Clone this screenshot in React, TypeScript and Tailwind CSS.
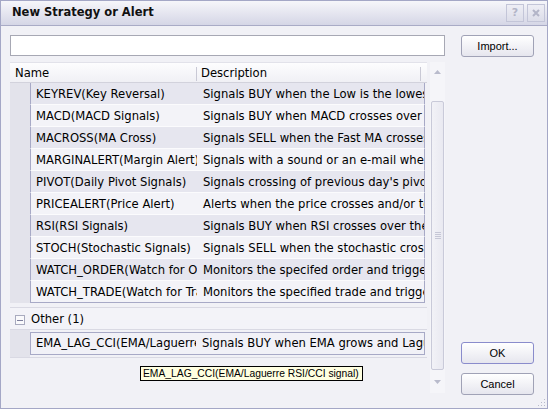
import React from 'react';

const rows: [string, string][] = [
  ['KEYREV(Key Reversal)', 'Signals BUY when the Low is the lowest Low for the period'],
  ['MACD(MACD Signals)', 'Signals BUY when MACD crosses over the signal line'],
  ['MACROSS(MA Cross)', 'Signals SELL when the Fast MA crosses under the Slow MA'],
  ['MARGINALERT(Margin Alert)', 'Signals with a sound or an e-mail when the margin level drops'],
  ['PIVOT(Daily Pivot Signals)', "Signals crossing of previous day's pivot levels"],
  ['PRICEALERT(Price Alert)', 'Alerts when the price crosses and/or touches the level'],
  ['RSI(RSI Signals)', 'Signals BUY when RSI crosses over the oversold level'],
  ['STOCH(Stochastic Signals)', 'Signals SELL when the stochastic crosses the overbought level'],
  ['WATCH_ORDER(Watch for Order)', 'Monitors the specifed order and triggers the alert'],
  ['WATCH_TRADE(Watch for Trade)', 'Monitors the specified trade and triggers the alert'],
];

const font = "font-['DejaVu_Sans',Verdana,sans-serif] text-[11.6px]";
const btnFont = "font-['Liberation_Sans',Arial,sans-serif] text-[11px]";

function Row({ name, desc, dark, last }: { name: string; desc: string; dark: boolean; last: boolean }) {
  return (
    <div className="flex h-[22px]">
      <div className="w-[20px] shrink-0 bg-[#e3e3eb]" />
      <div
        className={`flex w-[395px] shrink-0 items-center border-x border-[#a7a9c6] pt-[2px] ${
          last ? 'border-b border-b-[#a7a9c6]' : 'border-b border-b-[#fbfbfd]'
        } ${dark ? 'bg-[#e6e6ef]' : 'bg-[#f3f3f8]'}`}
      >
        <div className="w-[166px] shrink-0 overflow-hidden whitespace-nowrap pl-[5px] text-black">{name}</div>
        <div className="flex-1 overflow-hidden whitespace-nowrap pl-[6px] text-black">{desc}</div>
      </div>
    </div>
  );
}

function Button({ label, primary, className = '' }: { label: string; primary?: boolean; className?: string }) {
  return (
    <div
      className={`flex h-[22px] w-[73px] items-center justify-center rounded-[3px] border bg-gradient-to-b from-[#ffffff] to-[#e6e6ee] text-black ${btnFont} ${
        primary ? 'border-[#8a8ccc]' : 'border-[#a0a2b6]'
      } ${className}`}
    >
      {label}
    </div>
  );
}

export default function App() {
  return (
    <div className={`relative flex h-[409px] w-[548px] flex-col border border-[#a4a7c6] bg-[#f1f1f6] ${font}`}>
      {/* title bar */}
      <div className="flex h-[25px] shrink-0 items-center border-b border-[#a9abc6] bg-gradient-to-b from-[#f6f6fa] to-[#d5d6e6] pl-[11px] pr-[2px]">
        <span className="text-[11.5px] font-bold text-[#111]">New Strategy or Alert</span>
        <div className="ml-auto flex gap-[3px]">
          <div className="flex h-[18px] w-[18px] items-center justify-center border border-[#c3c5d8] bg-gradient-to-b from-[#eeeef5] to-[#dcdde9] text-[11px] font-bold text-[#b3b5c8]">
            ?
          </div>
          <div className="flex h-[18px] w-[18px] items-center justify-center border border-[#c3c5d8] bg-gradient-to-b from-[#eeeef5] to-[#dcdde9]">
            <svg width="8" height="8" viewBox="0 0 8 8">
              <path d="M1 1L7 7M7 1L1 7" stroke="#b3b5c8" strokeWidth="2" />
            </svg>
          </div>
        </div>
      </div>

      {/* body */}
      <div className="flex flex-1 pb-[13px] pl-[9px] pt-[9px]">
        <div className="flex w-[435px] flex-col">
          <div className="h-[21px] border border-[#a7a8b4] bg-white" />
          <div className="mt-[6px] flex h-[331px]">
            <div className="w-[417px] overflow-hidden">
              {/* header */}
              <div className="flex h-[21px] items-center border-y border-t-[#e2e2ea] border-b-[#d2d2dc] bg-gradient-to-b from-[#fdfdfe] to-[#f0f0f5] pt-[2px]">
                <div className="w-[186px] pl-[5px] text-black">Name</div>
                <div className="h-[14px] w-px bg-[#c9c9d5]" />
                <div className="w-[223px] pl-[4px] text-black">Description</div>
                <div className="h-[14px] w-px bg-[#c9c9d5]" />
              </div>
              {rows.map(([n, d], i) => (
                <Row key={n} name={n} desc={d} dark={i % 2 === 0} last={i === rows.length - 1} />
              ))}
              <div className="h-[5px] border-b border-[#d9d9e3]" />
              {/* group */}
              <div className="flex h-[22px] items-center border-b border-[#d9d9e3] bg-[#f3f3f8] pt-[3px]">
                <div className="ml-[5px] flex h-[10px] w-[10px] items-center justify-center border border-[#a9abbf] bg-[#fafafc]">
                  <div className="h-px w-[6px] bg-[#7d7f9c]" />
                </div>
                <span className="ml-[6px] text-black">Other (1)</span>
              </div>
              <div className="flex h-[28px] border-b border-[#d9d9e3]">
                <div className="w-[20px] shrink-0 bg-[#e3e3eb]" />
                <div className="my-[2px] flex h-[23px] w-[395px] shrink-0 items-center border border-[#a7a9c6] bg-[#f1f1f7] pt-[1px]">
                  <div className="w-[165px] shrink-0 overflow-hidden whitespace-nowrap pl-[5px] text-black">
                    EMA_LAG_CCI(EMA/Laguerre RSI/CCI signal)
                  </div>
                  <div className="flex-1 overflow-hidden whitespace-nowrap pl-[6px] text-black">
                    Signals BUY when EMA grows and Laguerre RSI crosses
                  </div>
                </div>
              </div>
            </div>

            {/* scrollbar */}
            <div className="ml-[3px] flex w-[15px] flex-col bg-[#f5f5f9]">
              <div className="flex h-[39px] items-start justify-center pt-[8px]">
                <svg width="7" height="4" viewBox="0 0 7 4">
                  <path d="M0 4L3.5 0L7 4Z" fill="#b9bbcc" />
                </svg>
              </div>
              <div className="mx-px flex h-[269px] items-center justify-center rounded-[2px] border border-[#c9cad9] bg-gradient-to-r from-[#f2f2f7] to-[#e9e9f1]">
                <div className="flex flex-col gap-[1px]">
                  <div className="h-px w-[6px] bg-[#c6c7d6]" />
                  <div className="h-px w-[6px] bg-[#c6c7d6]" />
                  <div className="h-px w-[6px] bg-[#c6c7d6]" />
                  <div className="h-px w-[6px] bg-[#c6c7d6]" />
                </div>
              </div>
              <div className="flex flex-1 items-start justify-center pt-[10px]">
                <svg width="7" height="4" viewBox="0 0 7 4">
                  <path d="M0 0L7 0L3.5 4Z" fill="#b9bbcc" />
                </svg>
              </div>
            </div>
          </div>
        </div>

        <div className="ml-[16px] flex w-[73px] flex-col">
          <Button label="Import..." />
          <div className="flex-1" />
          <Button label="OK" primary />
          <Button label="Cancel" className="mt-[9px]" />
        </div>
      </div>

      {/* tooltip */}
      <div className="absolute left-[139px] top-[365px] flex h-[15px] w-[223px] items-center whitespace-nowrap border border-black bg-[#ffffe1] px-[2px] font-['Liberation_Sans',Arial,sans-serif] text-[10.3px] text-black">
        EMA_LAG_CCI(EMA/Laguerre RSI/CCI signal)
      </div>

      {/* resize grip */}
      <svg className="absolute bottom-[1px] right-[1px]" width="8" height="8" viewBox="0 0 8 8">
        <rect x="6" y="0" width="1" height="1" fill="#b8bacb" />
        <rect x="3" y="3" width="1" height="1" fill="#b8bacb" />
        <rect x="6" y="3" width="1" height="1" fill="#b8bacb" />
        <rect x="0" y="6" width="1" height="1" fill="#b8bacb" />
        <rect x="3" y="6" width="1" height="1" fill="#b8bacb" />
        <rect x="6" y="6" width="1" height="1" fill="#b8bacb" />
      </svg>
    </div>
  );
}
